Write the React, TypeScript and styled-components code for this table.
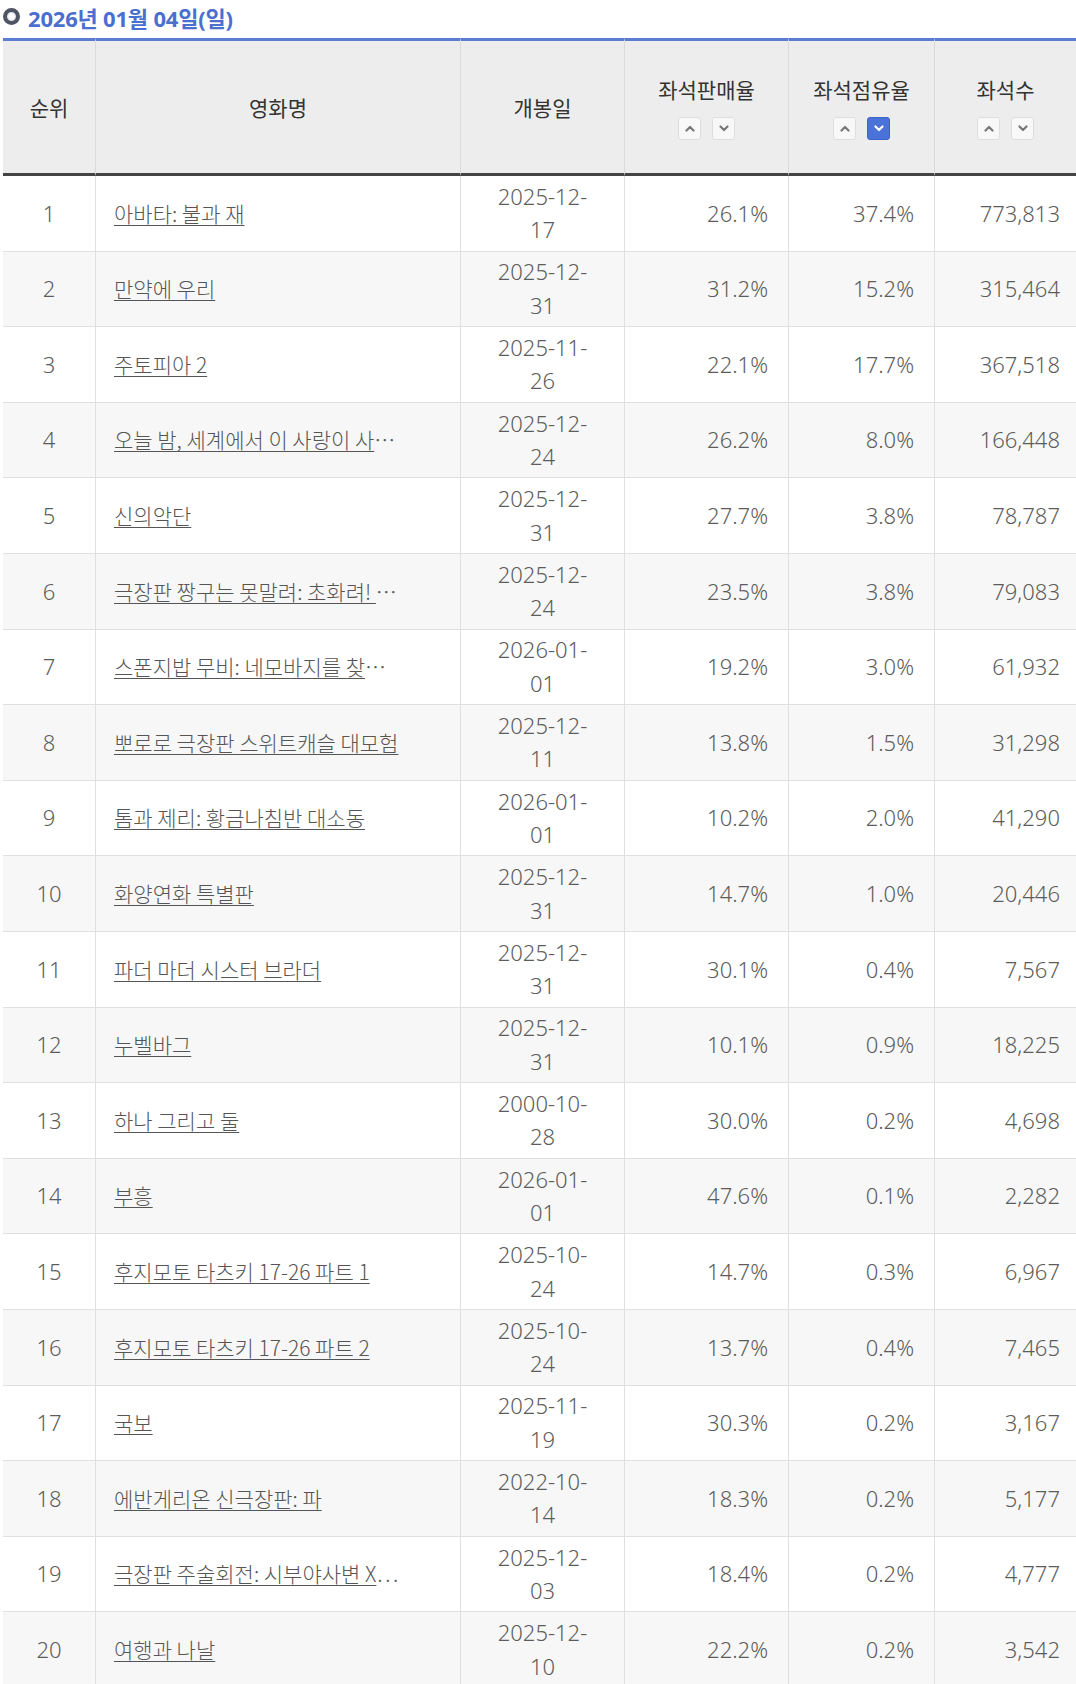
import React from 'react';
import styled, { createGlobalStyle } from 'styled-components';

const GlobalStyle = createGlobalStyle`
    html, body {
        margin: 0;
        padding: 0;
        overflow: hidden;
        background: #ffffff;
    }
    body {
        font-family: 'Noto Sans', 'Noto Sans CJK KR', sans-serif;
        color: #555;
    }
`;

const Page = styled.div`
    padding-left: 3px;
`;

const Title = styled.h2`
    display: flex;
    align-items: center;
    gap: 8px;
    height: 38px;
    margin: 0;
    padding-bottom: 5px;
    box-sizing: border-box;
    font-size: 22px;
    font-weight: 700;
    color: #4a6fcf;
    letter-spacing: -0.2px;
`;

const Bullet = styled.span`
    width: 17px;
    height: 17px;
    border-radius: 50%;
    box-sizing: border-box;
    border: 4px solid #4f5563;
    background: radial-gradient(circle, #ffffff 30%, #c9ccd4 100%);
    filter: blur(0.4px);
`;

const Table = styled.table`
    width: 1073px;
    border-collapse: separate;
    border-spacing: 0;
    table-layout: fixed;
`;

const Th = styled.th<{ $first?: boolean }>`
    background: #ededed;
    border-top: 3px solid #5a7dd1;
    border-bottom: 3px solid #444;
    border-left: ${(p) => (p.$first ? 'none' : '1px solid #dadada')};
    padding: 33.5px 0;
    font-family: 'Noto Sans CJK KR', sans-serif;
    font-size: 21px;
    font-weight: 400;
    line-height: 28px;
    color: #333;
    text-align: center;
    vertical-align: middle;
`;

const SortRow = styled.div`
    display: flex;
    justify-content: center;
    gap: 11px;
    margin-top: 14px;
`;

const SortButton = styled.button<{ $active?: boolean }>`
    width: 23px;
    height: 23px;
    padding: 0;
    display: flex;
    align-items: center;
    justify-content: center;
    border-radius: 3px;
    border: 1px solid ${(p) => (p.$active ? '#3c63c6' : '#dedede')};
    background: ${(p) => (p.$active ? '#4a72d8' : '#f8f8f8')};
    color: ${(p) => (p.$active ? '#ffffff' : '#777')};
`;

const Tr = styled.tr<{ $alt: boolean }>`
    background: ${(p) => (p.$alt ? '#f7f7f7' : '#ffffff')};
`;

const Td = styled.td<{ $align: 'left' | 'center' | 'right'; $first?: boolean }>`
    padding: 3.9px 20px;
    border-bottom: 1px solid #e0e0e0;
    border-left: ${(p) => (p.$first ? 'none' : '1px solid #e0e0e0')};
    font-size: 22px;
    font-weight: 300;
    line-height: 33.4px;
    color: #5c5c5c;
    text-align: ${(p) => p.$align};
    vertical-align: middle;
    white-space: nowrap;
    overflow: hidden;
`;

const TitleCell = styled(Td)`
    padding-left: 18px;
    font-family: 'Noto Sans CJK KR', sans-serif;
    font-size: 21px;
`;

const LastCell = styled(Td)`
    padding-right: 16px;
`;

const MovieLink = styled.a`
    color: #555;
    text-decoration: underline;
    text-underline-offset: 3px;
    text-decoration-thickness: 1px;
`;

function Chevron({ down }: { down?: boolean }) {
    return (
        <svg width="10" height="7" viewBox="0 0 10 7">
            <polyline
                points={down ? '1.5,1.5 5,5 8.5,1.5' : '1.5,5.5 5,2 8.5,5.5'}
                fill="none"
                stroke="currentColor"
                strokeWidth="2.2"
                strokeLinecap="round"
                strokeLinejoin="round"
            />
        </svg>
    );
}

function Sort({ active }: { active?: 'down' }) {
    return (
        <SortRow>
            <SortButton>
                <Chevron />
            </SortButton>
            <SortButton $active={active === 'down'}>
                <Chevron down />
            </SortButton>
        </SortRow>
    );
}

interface IMovie {
    title: string;
    cut?: boolean;
    open: string;
    sales: string;
    share: string;
    seats: string;
}

const movies: IMovie[] = [
    { title: '아바타: 불과 재', open: '2025-12-17', sales: '26.1%', share: '37.4%', seats: '773,813' },
    { title: '만약에 우리', open: '2025-12-31', sales: '31.2%', share: '15.2%', seats: '315,464' },
    { title: '주토피아 2', open: '2025-11-26', sales: '22.1%', share: '17.7%', seats: '367,518' },
    { title: '오늘 밤, 세계에서 이 사랑이 사', cut: true, open: '2025-12-24', sales: '26.2%', share: '8.0%', seats: '166,448' },
    { title: '신의악단', open: '2025-12-31', sales: '27.7%', share: '3.8%', seats: '78,787' },
    { title: '극장판 짱구는 못말려: 초화려!\u00a0', cut: true, open: '2025-12-24', sales: '23.5%', share: '3.8%', seats: '79,083' },
    { title: '스폰지밥 무비: 네모바지를 찾', cut: true, open: '2026-01-01', sales: '19.2%', share: '3.0%', seats: '61,932' },
    { title: '뽀로로 극장판 스위트캐슬 대모험', open: '2025-12-11', sales: '13.8%', share: '1.5%', seats: '31,298' },
    { title: '톰과 제리: 황금나침반 대소동', open: '2026-01-01', sales: '10.2%', share: '2.0%', seats: '41,290' },
    { title: '화양연화 특별판', open: '2025-12-31', sales: '14.7%', share: '1.0%', seats: '20,446' },
    { title: '파더 마더 시스터 브라더', open: '2025-12-31', sales: '30.1%', share: '0.4%', seats: '7,567' },
    { title: '누벨바그', open: '2025-12-31', sales: '10.1%', share: '0.9%', seats: '18,225' },
    { title: '하나 그리고 둘', open: '2000-10-28', sales: '30.0%', share: '0.2%', seats: '4,698' },
    { title: '부흥', open: '2026-01-01', sales: '47.6%', share: '0.1%', seats: '2,282' },
    { title: '후지모토 타츠키 17-26 파트 1', open: '2025-10-24', sales: '14.7%', share: '0.3%', seats: '6,967' },
    { title: '후지모토 타츠키 17-26 파트 2', open: '2025-10-24', sales: '13.7%', share: '0.4%', seats: '7,465' },
    { title: '국보', open: '2025-11-19', sales: '30.3%', share: '0.2%', seats: '3,167' },
    { title: '에반게리온 신극장판: 파', open: '2022-10-14', sales: '18.3%', share: '0.2%', seats: '5,177' },
    { title: '극장판 주술회전: 시부야사변 X', cut: true, open: '2025-12-03', sales: '18.4%', share: '0.2%', seats: '4,777' },
    { title: '여행과 나날', open: '2025-12-10', sales: '22.2%', share: '0.2%', seats: '3,542' },
];

function App() {
    return (
        <Page>
            <GlobalStyle />
            <Title>
                <Bullet />
                2026년 01월 04일(일)
            </Title>
            <Table>
                <colgroup>
                    <col style={{ width: 92 }} />
                    <col style={{ width: 365 }} />
                    <col style={{ width: 164 }} />
                    <col style={{ width: 164 }} />
                    <col style={{ width: 146 }} />
                    <col style={{ width: 142 }} />
                </colgroup>
                <thead>
                    <tr>
                        <Th $first>순위</Th>
                        <Th>영화명</Th>
                        <Th>개봉일</Th>
                        <Th>
                            좌석판매율
                            <Sort />
                        </Th>
                        <Th>
                            좌석점유율
                            <Sort active="down" />
                        </Th>
                        <Th>
                            좌석수
                            <Sort />
                        </Th>
                    </tr>
                </thead>
                <tbody>
                    {movies.map((m, i) => (
                        <Tr key={m.title} $alt={i % 2 === 1}>
                            <Td $align="center" $first>
                                {i + 1}
                            </Td>
                            <TitleCell $align="left">
                                <MovieLink href="#">{m.title}</MovieLink>
                                {m.cut && '…'}
                            </TitleCell>
                            <Td $align="center">
                                {m.open.slice(0, 8)}
                                <br />
                                {m.open.slice(8)}
                            </Td>
                            <Td $align="right">{m.sales}</Td>
                            <Td $align="right">{m.share}</Td>
                            <LastCell $align="right">{m.seats}</LastCell>
                        </Tr>
                    ))}
                </tbody>
            </Table>
        </Page>
    );
}

export default App;
